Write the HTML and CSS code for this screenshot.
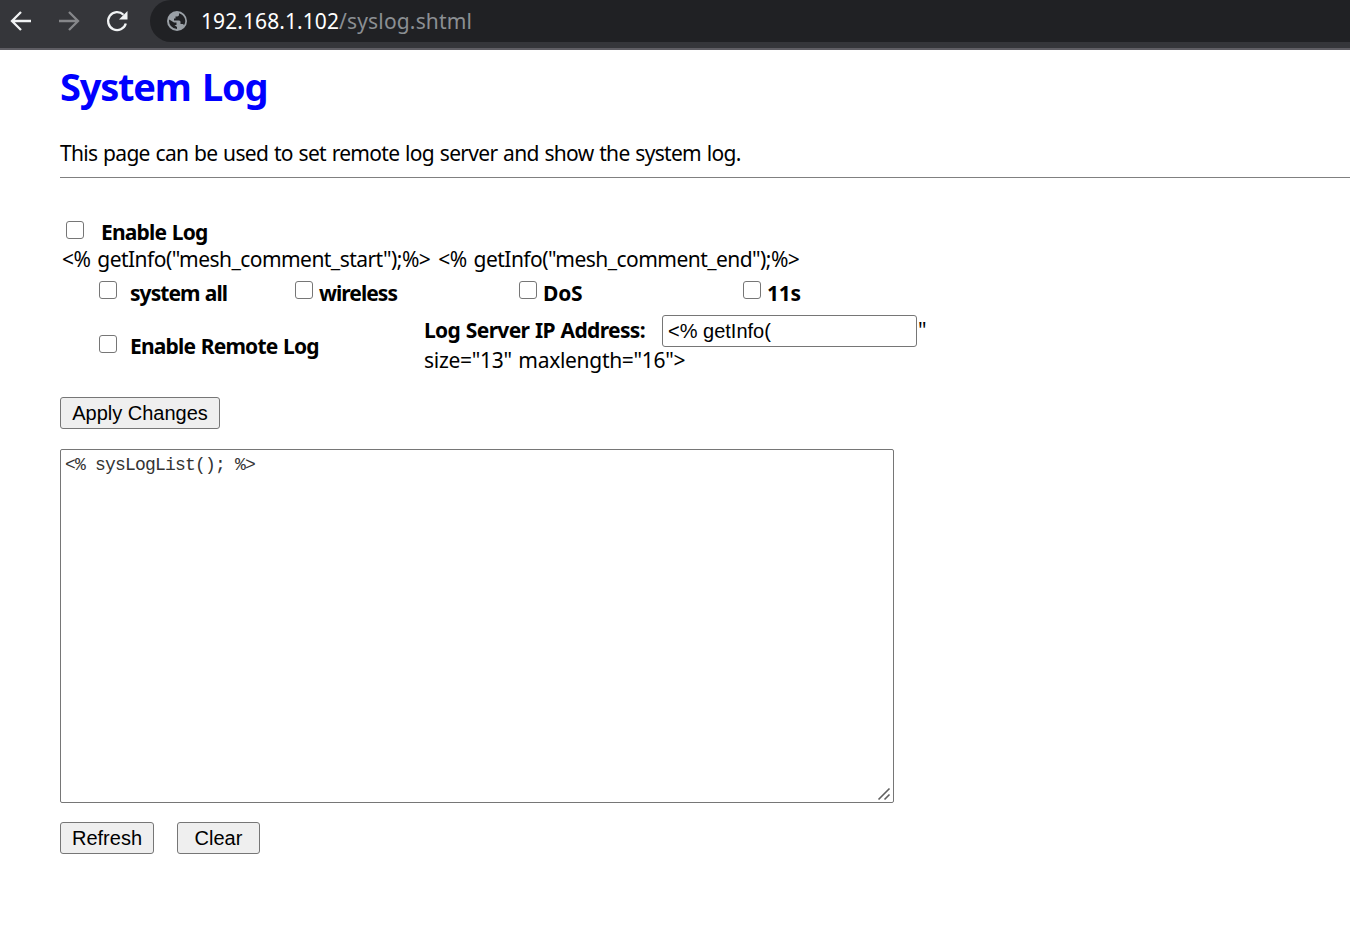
FILE: index.html
```html
<!DOCTYPE html>
<html lang="en">
<head>
<meta charset="utf-8">
<title>System Log</title>
<link rel="stylesheet" href="styles.css">
</head>
<body>
<header class="toolbar">
  <svg class="nav-icon" viewBox="0 0 24 24"><path d="M22 12H3.500M12 3L3 12l9 9"/></svg>
  <svg class="nav-icon nav-icon-off" viewBox="0 0 24 24"><path d="M2 12h18.500M12 3l9 9-9 9"/></svg>
  <svg class="nav-icon" viewBox="0 0 24 24"><path d="M20.800 14.500A9 9 0 1 1 18.500 5.700"/><path class="solid" d="M22.500 2v8.500H14z"/></svg>
  <div class="address">
    <svg class="globe" viewBox="0 0 20 20"><circle cx="10" cy="10" r="10"/><path d="M2.200 8.500L7 11.500H9.500v2.500h-2l2.500 2v2A8 8 0 0 1 2.200 8.500zM12 2.200v1.600c0 1-.8 1.700-1.800 1.700H8.500v2H7v2h5c1 0 1.500.8 1.500 1.700v1.800h1.500c1 0 1.800.5 2 1.300A8 8 0 0 0 12 2.200z"/></svg>
    <span class="url"><span class="host">192.168.1.102</span><span class="path">/syslog.shtml</span></span>
  </div>
</header>
<main class="page">
  <h1>System Log</h1>
  <p class="intro">This page can be used to set remote log server and show the system log.</p>
  <hr>
  <form class="form">
    <label class="row enable"><input type="checkbox"><b>Enable Log</b></label>
    <div class="row template"><span>&lt;% getInfo("mesh_comment_start");%&gt;</span><span>&lt;% getInfo("mesh_comment_end");%&gt;</span></div>
    <div class="row options">
      <label class="opt"><input type="checkbox"><b>system all</b></label>
      <label class="opt"><input type="checkbox"><b>wireless</b></label>
      <label class="opt"><input type="checkbox"><b class="dos">DoS</b></label>
      <label class="opt"><input type="checkbox"><b class="mesh">11s</b></label>
    </div>
    <div class="row remote">
      <label class="opt"><input type="checkbox"><b>Enable Remote Log</b></label>
      <div class="server">
        <div class="server-line"><b>Log Server IP Address:</b><input class="ip" type="text" value="&lt;% getInfo("><span>"</span></div>
        <div class="server-rest">size="13" maxlength="16"&gt;</div>
      </div>
    </div>
    <button class="btn apply" type="button">Apply Changes</button>
    <div class="log-box">
      <textarea class="log">&lt;% sysLogList(); %&gt;</textarea>
      <svg class="grip" viewBox="0 0 14 14"><path d="M1.500 12.500l11-11M7.500 12.500l5-5"/></svg>
    </div>
    <div class="actions"><button class="btn refresh" type="button">Refresh</button><button class="btn clear" type="button">Clear</button></div>
  </form>
</main>
</body>
</html>
```
FILE: styles.css
```css
* { box-sizing: border-box; }
body { margin: 0; background: #fff; color: #000; font: 21px/26px "Noto Sans", sans-serif; height: 937px; overflow: hidden; }
.toolbar { display: flex; height: 50px; background: #35363a; border-bottom: 2px solid #5f5e64; padding-left: 9px; }
.nav-icon { width: 24px; height: 24px; margin: 9px 24px 0 0; fill: none; stroke: #f1f3f4; stroke-width: 2.3; }
.nav-icon .solid { fill: #f1f3f4; stroke: none; }
.nav-icon-off { stroke: #86878a; }
.address { flex: 1; display: flex; height: 42px; margin-left: -3px; padding-left: 17px; background: #202124; border-radius: 21px 0 0 21px; }
.globe { width: 20px; height: 20px; margin: 11px 14px 0 0; fill: #9aa0a6; }
.globe path { fill: #202124; }
.url { line-height: 42px; white-space: nowrap; }
.host { color: #fff; letter-spacing: 0.08px; }
.path { color: #8b8f93; letter-spacing: 0.16px; }
.page { padding: 9px 0 0 60px; white-space: nowrap; }
h1 { margin: 0; color: #00f; font-size: 38px; line-height: 54px; letter-spacing: -1.25px; word-spacing: 3px; }
.intro { margin: 27px 0 0; letter-spacing: -0.7px; word-spacing: 1px; }
hr { height: 1px; margin: 11px 0 0; border: 0; background: #808080; }
.form { margin-top: 41px; }
.row, .opt { display: flex; }
.row b { letter-spacing: -0.8px; word-spacing: 0.8px; }
input[type="checkbox"] { appearance: none; flex: none; width: 18px; height: 18px; margin: 0; border: 1px solid #767676; border-radius: 3px; background: #fff; }
.enable { padding-left: 6px; gap: 17px; height: 27px; }
.enable input { margin-top: 2px; }
.template { padding-left: 2px; gap: 8px; letter-spacing: -0.54px; word-spacing: 2px; }
.options { padding-left: 39px; margin-top: 8px; }
.options .opt { width: 224px; gap: 6px; }
.options .opt:first-child { width: 196px; gap: 13px; }
.options input { margin-top: 1px; }
.options b { letter-spacing: -0.95px; }
.options .dos, .options .mesh { letter-spacing: -0.2px; }
.remote { padding-left: 39px; height: 61px; margin-top: 9px; }
.remote .opt { width: 325px; gap: 13px; padding-top: 18px; }
.remote .opt input { margin-top: 2px; }
.server-line { display: flex; height: 32px; line-height: 31px; }
.server-line b { width: 221px; letter-spacing: -0.66px; word-spacing: 0.9px; }
.server-rest { line-height: 27px; letter-spacing: -0.3px; word-spacing: 1.5px; }
.ip { width: 255px; height: 32px; margin-left: 17px; margin-right: 1px; padding: 0 5px; border: 1px solid #767676; border-radius: 3px; font: 20px "Liberation Sans", Arial, sans-serif; }
.btn { height: 32px; padding: 0; border: 1px solid #767676; border-radius: 3px; background: #efefef; color: #000; font: 20px "Liberation Sans", Arial, sans-serif; }
.apply { display: block; width: 160px; margin-top: 21px; }
.log-box { position: relative; width: 834px; height: 354px; margin: 20px 0 19px; }
.log { display: block; width: 100%; height: 100%; padding: 4px; border: 1px solid #767676; border-radius: 2px; resize: none; color: #333; font: 18px/23px "Liberation Mono", monospace; letter-spacing: -0.8px; }
.grip { position: absolute; right: 3px; bottom: 2px; width: 14px; height: 14px; fill: none; stroke: #606060; stroke-width: 1.6; }
.actions { display: flex; gap: 23px; }
.refresh { width: 94px; }
.clear { width: 83px; }
```
